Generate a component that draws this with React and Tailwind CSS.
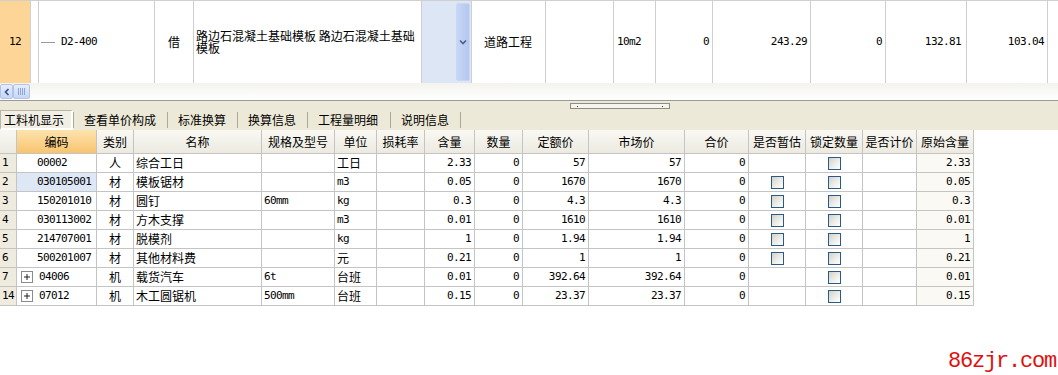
import React from "react";

const CJK = "font-['Noto_Sans_CJK_SC',sans-serif] text-[12px]";
const MONO = "font-['DejaVu_Sans_Mono',monospace] text-[11px] tracking-[-0.6px]";

function T({ children }) {
  const s = String(children);
  const ascii = /^[\x00-\x7F]*$/.test(s);
  return <span className={ascii ? MONO : CJK}>{s}</span>;
}

function Check() {
  return (
    <div className="w-[13px] h-[13px] border border-[#2c5a86] bg-gradient-to-br from-[#d2d1c7] via-[#ebebe6] to-white" />
  );
}

function Plus() {
  return (
    <svg width="12" height="12" viewBox="0 0 12 12" className="shrink-0">
      <rect x="0.5" y="0.5" width="11" height="11" fill="#fff" stroke="#8a8a8a" />
      <line x1="3" y1="6" x2="9" y2="6" stroke="#222" />
      <line x1="6" y1="3" x2="6" y2="9" stroke="#222" />
    </svg>
  );
}

const cols = [
  { w: "w-[17px]", t: "" },
  { w: "w-[80px]", t: "编码", hl: true },
  { w: "w-[37px]", t: "类别" },
  { w: "w-[128px]", t: "名称" },
  { w: "w-[73px]", t: "规格及型号" },
  { w: "w-[42px]", t: "单位" },
  { w: "w-[48px]", t: "损耗率" },
  { w: "w-[50px]", t: "含量" },
  { w: "w-[48px]", t: "数量" },
  { w: "w-[66px]", t: "定额价" },
  { w: "w-[96px]", t: "市场价" },
  { w: "w-[64px]", t: "合价" },
  { w: "w-[57px]", t: "是否暂估" },
  { w: "w-[57px]", t: "锁定数量" },
  { w: "w-[54px]", t: "是否计价" },
  { w: "w-[57px]", t: "原始含量" },
];

const rows = [
  ["1", "00002", false, "人", "综合工日", "", "工日", "2.33", "0", "57", "57", "0", false, true, "2.33"],
  ["2", "030105001", false, "材", "模板锯材", "", "m3", "0.05", "0", "1670", "1670", "0", true, true, "0.05"],
  ["3", "150201010", false, "材", "圆钉", "60mm", "kg", "0.3", "0", "4.3", "4.3", "0", true, true, "0.3"],
  ["4", "030113002", false, "材", "方木支撑", "", "m3", "0.01", "0", "1610", "1610", "0", true, true, "0.01"],
  ["5", "214707001", false, "材", "脱模剂", "", "kg", "1", "0", "1.94", "1.94", "0", true, true, "1"],
  ["6", "500201007", false, "材", "其他材料费", "", "元", "0.21", "0", "1", "1", "0", true, true, "0.21"],
  ["7", "04006", true, "机", "载货汽车", "6t", "台班", "0.01", "0", "392.64", "392.64", "0", false, true, "0.01"],
  ["14", "07012", true, "机", "木工圆锯机", "500mm", "台班", "0.15", "0", "23.37", "23.37", "0", false, true, "0.15"],
];

const B = "border-r border-b border-[#c4c4c4] h-[19px] flex items-center shrink-0";

function TopCell({ w, className = "", children }) {
  return (
    <div className={`${w} h-full border-r border-[#cfcfcf] flex items-center shrink-0 ${className}`}>
      {children}
    </div>
  );
}

function Sep() {
  return <div className="w-px bg-[#aca899] my-[2px] shrink-0" />;
}

export default function App() {
  return (
    <div className="w-[1058px] h-[375px] overflow-hidden bg-white text-black relative">
      {/* top record row */}
      <div className="flex h-[83px] border-t border-[#cfcfcf] bg-white">
        <TopCell w="w-[31px]" className="bg-[#fdd597] justify-center">
          <T>12</T>
        </TopCell>
        <TopCell w="w-[8px]" />
        <TopCell w="w-[116px]">
          <div className="w-[14px] h-px bg-[#9a9a9a] ml-[2px] mr-[6px]" />
          <T>D2-400</T>
        </TopCell>
        <TopCell w="w-[39px]" className="justify-center">
          <T>借</T>
        </TopCell>
        <TopCell w="w-[228px]" className="pl-[2px]">
          <div className={`${CJK} leading-[12px] w-[224px] break-all`}>
            路边石混凝土基础模板 路边石混凝土基础模板
          </div>
        </TopCell>
        <div className="w-[34px] h-full bg-[#dde6f4] shrink-0" />
        <div className="w-[16px] h-full shrink-0 py-[2px] pr-px bg-[#dde6f4] border-r border-[#cfcfcf]">
          <div className="h-full rounded-[2px] border border-[#c9d6f4] bg-gradient-to-r from-[#c7d6f7] to-[#b5c7f0] flex items-center justify-center">
            <svg width="8" height="6" viewBox="0 0 8 6">
              <path d="M1 1.5 L4 4.5 L7 1.5" fill="none" stroke="#4a5f8a" strokeWidth="1.6" />
            </svg>
          </div>
        </div>
        <TopCell w="w-[74px]" className="pl-[12px]">
          <T>道路工程</T>
        </TopCell>
        <TopCell w="w-[68px]" />
        <TopCell w="w-[42px]" className="pl-[3px]">
          <T>10m2</T>
        </TopCell>
        <TopCell w="w-[57px]" className="justify-end pr-[3px]">
          <T>0</T>
        </TopCell>
        <TopCell w="w-[98px]" className="justify-end pr-[3px]">
          <T>243.29</T>
        </TopCell>
        <TopCell w="w-[75px]" className="justify-end pr-[3px]">
          <T>0</T>
        </TopCell>
        <TopCell w="w-[81px]" className="justify-end pr-[5px]">
          <T>132.81</T>
        </TopCell>
        <TopCell w="w-[81px]" className="justify-end pr-[3px]">
          <T>103.04</T>
        </TopCell>
        <div className="flex-1" />
      </div>

      {/* horizontal scrollbar strip */}
      <div className="h-[17px] bg-gradient-to-b from-[#f4f3ee] to-white flex items-start pt-px">
        <div className="w-[13px] h-[15px] border border-[#b3c4ea] rounded-[2px] bg-gradient-to-b from-[#e6edfc] to-[#c7d6f6] flex items-center justify-center shrink-0">
          <svg width="6" height="8" viewBox="0 0 6 8">
            <path d="M4.5 1 L1.5 4 L4.5 7" fill="none" stroke="#34508a" strokeWidth="1.6" />
          </svg>
        </div>
        <div className="w-[17px] h-[15px] border border-[#b3c4ea] rounded-[2px] bg-gradient-to-b from-[#e6edfc] to-[#c7d6f6] flex items-center justify-center gap-px shrink-0">
          <div className="w-px h-[7px] bg-[#8ea4d4]" />
          <div className="w-px h-[7px] bg-[#8ea4d4]" />
          <div className="w-px h-[7px] bg-[#8ea4d4]" />
          <div className="w-px h-[7px] bg-[#8ea4d4]" />
        </div>
      </div>

      {/* tab bar */}
      <div className="h-[30px] border-t border-[#9a9a9a] bg-[#ece9d8] flex flex-col">
        <div className="h-[9px] pt-[2px]">
          <div className="ml-[570px] w-[100px] h-[6px] border border-[#8f8d80] bg-[#f5f4ee] flex items-center justify-between px-[6px]">
            <div className="w-px h-px bg-[#333]" />
            <div className="w-px h-px bg-[#333]" />
          </div>
        </div>
        <div className="flex h-[20px] items-stretch">
          <div className="w-[73px] pl-[3px] flex items-center shrink-0 border-t border-l border-[#b9b6a6] border-r-2 border-b-2 border-r-white border-b-white bg-[#f1efe5]">
            <T>工料机显示</T>
          </div>
          <Sep />
          <div className="w-[93px] pl-[10px] flex items-center shrink-0"><T>查看单价构成</T></div>
          <Sep />
          <div className="w-[69px] pl-[10px] flex items-center shrink-0"><T>标准换算</T></div>
          <Sep />
          <div className="w-[69px] pl-[10px] flex items-center shrink-0"><T>换算信息</T></div>
          <Sep />
          <div className="w-[82px] pl-[10px] flex items-center shrink-0"><T>工程量明细</T></div>
          <Sep />
          <div className="w-[69px] pl-[10px] flex items-center shrink-0"><T>说明信息</T></div>
          <Sep />
        </div>
      </div>

      {/* material table */}
      <div className="flex flex-col w-[974px]">
        <div className="flex h-[24px]">
          {cols.map((c, i) => (
            <div
              key={i}
              className={`${c.w} h-full border-r border-b border-[#c4c4c4] flex items-center justify-center shrink-0 ${
                c.hl
                  ? "bg-gradient-to-b from-[#fde3ad] to-[#f8c46f]"
                  : "bg-gradient-to-b from-[#f9f8f3] to-[#eceae0]"
              }`}
            >
              {c.t && <T>{c.t}</T>}
            </div>
          ))}
        </div>
        {rows.map((r, i) => (
          <div key={i} className="flex">
            <div className={`${B} w-[17px] bg-[#efecdf] pl-[2px]`}>
              <T>{r[0]}</T>
            </div>
            <div className={`${B} w-[80px] ${r[0] === "2" ? "bg-[#dde7f5]" : ""} ${r[2] ? "pl-[4px]" : "pl-[20px]"}`}>
              {r[2] && (
                <span className="mr-[6px] flex items-center">
                  <Plus />
                </span>
              )}
              <T>{r[1]}</T>
            </div>
            <div className={`${B} w-[37px] justify-center`}>
              <T>{r[3]}</T>
            </div>
            <div className={`${B} w-[128px] pl-[2px]`}>
              <T>{r[4]}</T>
            </div>
            <div className={`${B} w-[73px] pl-[2px]`}>
              <T>{r[5]}</T>
            </div>
            <div className={`${B} w-[42px] pl-[2px]`}>
              <T>{r[6]}</T>
            </div>
            <div className={`${B} w-[48px]`} />
            <div className={`${B} w-[50px] justify-end pr-[3px]`}>
              <T>{r[7]}</T>
            </div>
            <div className={`${B} w-[48px] justify-end pr-[3px]`}>
              <T>{r[8]}</T>
            </div>
            <div className={`${B} w-[66px] justify-end pr-[3px]`}>
              <T>{r[9]}</T>
            </div>
            <div className={`${B} w-[96px] justify-end pr-[3px]`}>
              <T>{r[10]}</T>
            </div>
            <div className={`${B} w-[64px] justify-end pr-[3px]`}>
              <T>{r[11]}</T>
            </div>
            <div className={`${B} w-[57px] justify-center`}>{r[12] && <Check />}</div>
            <div className={`${B} w-[57px] justify-center`}>{r[13] && <Check />}</div>
            <div className={`${B} w-[54px]`} />
            <div className={`${B} w-[57px] justify-end pr-[3px] bg-[#fbf9f3]`}>
              <T>{r[14]}</T>
            </div>
          </div>
        ))}
      </div>

      {/* watermark */}
      <div className="flex justify-end pr-[2px] mt-[45px]">
        <span className="font-['Liberation_Mono',monospace] text-[22px] tracking-[-1.2px] leading-[22px] text-[#e01010]">
          86zjr.com
        </span>
      </div>
    </div>
  );
}
